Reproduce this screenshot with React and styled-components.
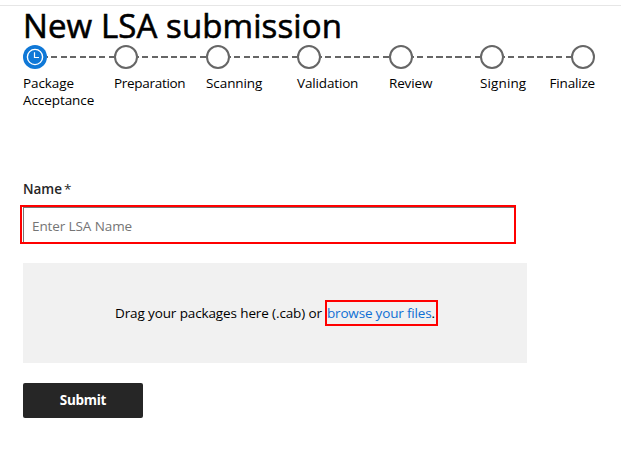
import React from "react";
import styled, { createGlobalStyle, css } from "styled-components";

const GlobalStyle = createGlobalStyle`
  * { box-sizing: border-box; }
  body {
    margin: 0;
    background: #fff;
    color: #000;
    font: 13.5px/17px "Open Sans", "Noto Sans", sans-serif;
  }
`;

const Page = styled.main`
  height: 463px;
  overflow: hidden;
  padding: 5px 0 0 23px;
`;

const TopRule = styled.div`
  height: 1px;
  margin-left: -23px;
  background: #e6e6e6;
`;

const Title = styled.h1`
  margin: 0;
  height: 39px;
  font-size: 33px;
  line-height: 40px;
  font-weight: 500;
  -webkit-text-stroke: 0.6px #000;
  letter-spacing: ${(p) => p.$track}px;
  white-space: nowrap;
`;

const Steps = styled.ol`
  display: grid;
  grid-template-columns: 91px 92px 91px 92px 91px 91px 24px;
  height: 133px;
  margin: 0;
  padding: 0;
  list-style: none;
`;

const Step = styled.li`
  display: flex;
  flex-direction: column;
  align-items: ${(p) => (p.$last ? "flex-end" : "stretch")};
  min-width: 0;
`;

const Track = styled.div`
  display: flex;
  align-items: center;
  height: 24px;
`;

const Marker = styled.svg`
  display: block;
  flex: none;
  width: 24px;
  height: 24px;
`;

const Dashes = styled.div`
  flex: 1;
  height: 2px;
  background: repeating-linear-gradient(
    90deg,
    #666 0 0.7px,
    transparent 0.7px 4px,
    #666 4px 9.6px
  );
`;

const StepLabel = styled.span`
  margin-top: 6px;
  white-space: pre-line;
  letter-spacing: ${(p) => p.$track}px;
`;

const FieldLabel = styled.label`
  display: flex;
  gap: 2px;
  height: 27px;
  padding-top: 3px;
  color: #262626;
  font-weight: 600;
  letter-spacing: ${(p) => p.$track}px;
`;

const Asterisk = styled.span`
  font-weight: 400;
`;

const highlight = css`
  border: 2px solid #f00;
`;

const FieldHighlight = styled.div`
  ${highlight}
  width: 496px;
  height: 39px;
  margin-left: -3px;
  padding-left: 1px;
`;

const NameInput = styled.input`
  display: block;
  width: 100%;
  height: 35px;
  border: solid #767676;
  border-width: 1px 0 0 1px;
  border-radius: 0;
  padding: 1px 8px 0;
  background: #fff;
  font: inherit;
  letter-spacing: ${(p) => p.$track}px;
  outline: none;
  &::placeholder { color: #757575; opacity: 1; }
`;

const DropZone = styled.section`
  display: flex;
  align-items: center;
  width: 504px;
  height: 100px;
  margin-top: 19px;
  padding-left: 92px;
  background: #f1f1f1;
  white-space: nowrap;
`;

const DropText = styled.span`
  width: 210px;
  letter-spacing: ${(p) => p.$track}px;
`;

const LinkHighlight = styled.span`
  ${highlight}
  width: 113px;
  height: 26px;
  line-height: 22px;
  letter-spacing: ${(p) => p.$track}px;
`;

const BrowseLink = styled.a`
  color: #0f6fd4;
  text-decoration: none;
`;

const SubmitButton = styled.button`
  display: block;
  width: 120px;
  height: 35px;
  margin-top: 20px;
  padding: 0;
  border: 0;
  border-radius: 2px;
  background: #262626;
  color: #fff;
  font: inherit;
  font-weight: 700;
  letter-spacing: ${(p) => p.$track}px;
`;

const steps = [
  { label: "Package\nAcceptance", track: -0.08 },
  { label: "Preparation", track: -0.3 },
  { label: "Scanning", track: -0.08 },
  { label: "Validation", track: -0.15 },
  { label: "Review", track: -0.15 },
  { label: "Signing", track: 0.12 },
  { label: "Finalize", track: -0.18 },
];

function StepMarker({ active }) {
  return (
    <Marker viewBox="0 0 24 24" fill="none">
      {active ? (
        <>
          <circle cx="12" cy="12" r="12" fill="#0f78d7" />
          <circle cx="12" cy="12" r="7.6" stroke="#fff" strokeWidth="1.4" />
          <path d="M11.5 7.2v5.3H16" stroke="#fff" strokeWidth="1.2" />
        </>
      ) : (
        <circle cx="12" cy="12" r="11" stroke="#666" strokeWidth="2" />
      )}
    </Marker>
  );
}

export default function App() {
  return (
    <>
      <GlobalStyle />
      <Page>
        <TopRule />
        <Title $track={0.1}>New LSA submission</Title>
        <Steps>
          {steps.map((step, i) => {
            const last = i === steps.length - 1;
            return (
              <Step key={step.label} $last={last}>
                <Track>
                  <StepMarker active={i === 0} />
                  {!last && <Dashes />}
                </Track>
                <StepLabel $track={step.track}>{step.label}</StepLabel>
              </Step>
            );
          })}
        </Steps>
        <FieldLabel htmlFor="name" $track={-0.05}>
          Name<Asterisk>*</Asterisk>
        </FieldLabel>
        <FieldHighlight>
          <NameInput id="name" placeholder="Enter LSA Name" $track={-0.1} />
        </FieldHighlight>
        <DropZone>
          <DropText $track={-0.12}>Drag your packages here (.cab) or</DropText>
          <LinkHighlight $track={-0.18}>
            <BrowseLink href="#">browse your files</BrowseLink>.
          </LinkHighlight>
        </DropZone>
        <SubmitButton $track={-0.3}>Submit</SubmitButton>
      </Page>
    </>
  );
}
